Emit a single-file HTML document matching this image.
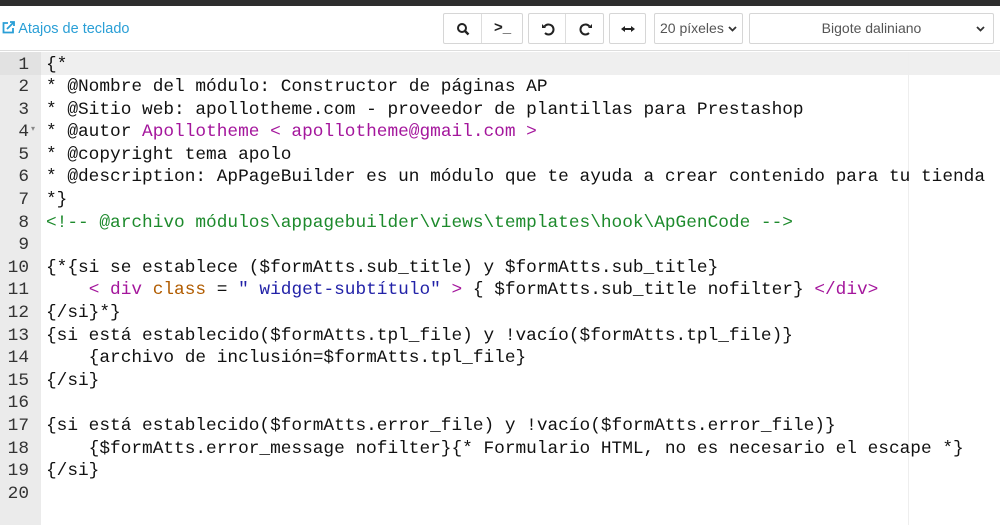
<!DOCTYPE html>
<html><head><meta charset="utf-8"><style>
*{margin:0;padding:0;box-sizing:border-box}
body{width:1000px;height:525px;overflow:hidden;background:#fff;font-family:"Liberation Sans",sans-serif;position:relative}
.top{position:absolute;left:0;top:0;width:1000px;height:6px;background:#2e2e2e}
.tb{position:absolute;left:0;top:6px;width:1000px;height:45px;border-bottom:1px solid #ddd;background:#fff}
.link{position:absolute;left:2px;top:15px;color:#2a9fd6;font-size:14.5px}
.btn{position:absolute;top:7px;height:31px;border:1px solid #d6d6d6;background:#fff;border-radius:2px}
.btn div{position:absolute;top:0;height:29px;border-right:1px solid #ddd}
.sel{position:absolute;top:7px;height:31px;border:1px solid #d6d6d6;font-size:14px;color:#555;line-height:29px;border-radius:2px}
.ed{position:absolute;left:0;top:52px;width:1000px;height:473px;background:#fff}
.gut{position:absolute;left:0;top:0;width:41px;height:473px;background:#ebebeb}
.hl{position:absolute;left:0;top:0;width:1000px;height:22.6px;background:#efefef}
.hlg{position:absolute;left:0;top:0;width:41px;height:22.6px;background:#e2e2e2}
.margin{position:absolute;left:908px;top:0;width:1px;height:473px;background:#eee}
.ln{position:absolute;left:0;top:1.5px;width:29px;text-align:right;font-family:"Liberation Mono",monospace;font-size:17.8px;line-height:22.6px;color:#333}
pre{position:absolute;left:46px;top:1.5px;font-family:"Liberation Mono",monospace;font-size:17.8px;line-height:22.6px;color:#111}
.g{color:#1d8a2c}.m{color:#a4169c}.o{color:#b15c00}.b{color:#2222a8}
</style></head><body>
<div class="top"></div>
<div class="tb">
<div class="link"><svg width="13" height="13" viewBox="0 0 13 13" style="vertical-align:-1px"><path d="M6 2H1.5v9.5H11V7" fill="none" stroke="#2a9fd6" stroke-width="1.8"/><path d="M5 8l7-7M8 1h4v4" fill="none" stroke="#2a9fd6" stroke-width="1.8"/></svg> Atajos de teclado</div>
<div class="btn" style="left:443px;width:80px"><div style="left:0;width:38px"></div>
<svg style="position:absolute;left:12px;top:8px" width="14" height="14" viewBox="0 0 14 14"><circle cx="6" cy="6" r="4" fill="none" stroke="#222" stroke-width="2"/><path d="M9 9l3.5 3.5" stroke="#222" stroke-width="2.4"/></svg>
<span style="position:absolute;left:50px;top:5px;font-size:15px;font-weight:bold;color:#222">&gt;_</span></div>
<div class="btn" style="left:528px;width:76px"><div style="left:0;width:37px"></div>
<svg style="position:absolute;left:12px;top:8px" width="14" height="14" viewBox="0 0 14 14"><path d="M3.5 4.5A5 5 0 1 1 4 11" fill="none" stroke="#222" stroke-width="2"/><path d="M1 2v4h4z" fill="#222"/></svg>
<svg style="position:absolute;left:50px;top:8px" width="14" height="14" viewBox="0 0 14 14"><path d="M10.5 4.5A5 5 0 1 0 10 11" fill="none" stroke="#222" stroke-width="2"/><path d="M13 2v4H9z" fill="#222"/></svg></div>
<div class="btn" style="left:609px;width:37px"><svg style="position:absolute;left:11px;top:9px" width="14" height="12" viewBox="0 0 14 12"><path d="M3 6h8" stroke="#222" stroke-width="2"/><path d="M0 6l4-3v6zM14 6l-4-3v6z" fill="#222"/></svg></div>
<div class="sel" style="left:654px;width:89px;padding-left:5px">20 píxeles <svg width="9" height="6" viewBox="0 0 9 6" style="vertical-align:1px"><path d="M1 1l3.5 3.5L8 1" fill="none" stroke="#333" stroke-width="1.8"/></svg></div>
<div class="sel" style="left:749px;width:245px;text-align:center">Bigote daliniano<svg style="position:absolute;right:8px;top:12px" width="9" height="6" viewBox="0 0 9 6"><path d="M1 1l3.5 3.5L8 1" fill="none" stroke="#333" stroke-width="1.8"/></svg></div>
</div>
<div class="ed">
<div class="gut"></div><div class="hl"></div><div class="hlg"></div><div class="margin"></div>
<div class="ln">1<br>2<br>3<br>4<br>5<br>6<br>7<br>8<br>9<br>10<br>11<br>12<br>13<br>14<br>15<br>16<br>17<br>18<br>19<br>20</div>
<span style="position:absolute;left:31px;top:72px;font-size:8px;color:#888">&#9662;</span>
<pre>{*
* @Nombre del módulo: Constructor de páginas AP
* @Sitio web: apollotheme.com - proveedor de plantillas para Prestashop
* @autor <span class="m">Apollotheme &lt; apollotheme@gmail.com &gt;</span>
* @copyright tema apolo
* @description: ApPageBuilder es un módulo que te ayuda a crear contenido para tu tienda
*}
<span class="g">&lt;!-- @archivo módulos\appagebuilder\views\templates\hook\ApGenCode --&gt;</span>

{*{si se establece ($formAtts.sub_title) y $formAtts.sub_title}
    <span class="m">&lt; div</span> <span class="o">class</span> = <span class="b">" widget-subtítulo"</span> <span class="m">&gt;</span> { $formAtts.sub_title nofilter} <span class="m">&lt;/div&gt;</span>
{/si}*}
{si está establecido($formAtts.tpl_file) y !vacío($formAtts.tpl_file)}
    {archivo de inclusión=$formAtts.tpl_file}
{/si}

{si está establecido($formAtts.error_file) y !vacío($formAtts.error_file)}
    {$formAtts.error_message nofilter}{* Formulario HTML, no es necesario el escape *}
{/si}
</pre>
</div>
</body></html>
